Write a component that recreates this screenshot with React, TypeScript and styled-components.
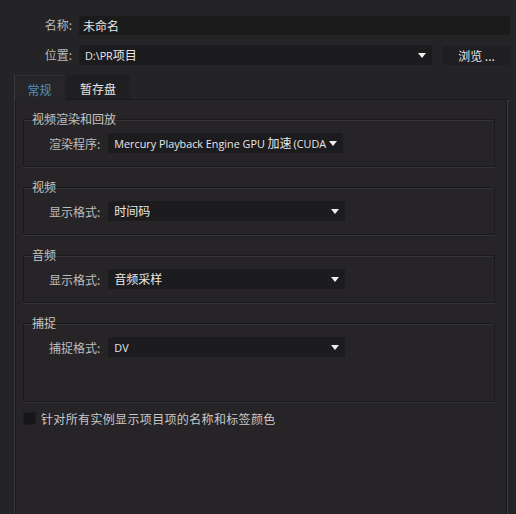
import React from "react";
import styled, { createGlobalStyle } from "styled-components";

const Global = createGlobalStyle`
  html, body { margin: 0; padding: 0; background: #242325; }
  body { font-family: "Noto Sans CJK SC", "Noto Sans", sans-serif; font-size: 12px; color: #cfcfcf; }
  * { box-sizing: border-box; }
`;

const Page = styled.div`
  width: 516px;
  height: 514px;
  overflow: hidden;
  background: #242325;
  padding: 15px 6px 0 14px;
  display: flex;
  flex-direction: column;
`;

const FieldRow = styled.div`
  display: grid;
  grid-template-columns: 58px 1fr auto;
  align-items: center;
  column-gap: 7px;
  height: 20px;
  margin-bottom: 10px;
`;

const Label = styled.span`
  text-align: right;
  color: #b9b9b9;
  font-size: 12px;
  line-height: 20px;
  white-space: nowrap;
`;

const TextInput = styled.div<{ $span?: boolean }>`
  grid-column: ${(p) => (p.$span ? "2 / 4" : "2 / 3")};
  height: 19px;
  background: #1b1b1c;
  color: #e6e6e6;
  padding-left: 4px;
  line-height: 19px;
  font-size: 12px;
`;

const Select = styled.div<{ $width?: number }>`
  position: relative;
  height: 20px;
  width: ${(p) => (p.$width ? `${p.$width}px` : "auto")};
  background: #1c1b1d;
  color: #e8e8e8;
  padding: 0 14px 0 6px;
  font-size: 12px;
  line-height: 20px;
  white-space: pre;
  overflow: hidden;
`;

const Arrow = styled.span`
  position: absolute;
  right: 6px;
  top: 8px;
  width: 0;
  height: 0;
  border-left: 4.5px solid transparent;
  border-right: 4.5px solid transparent;
  border-top: 5px solid #f0f0f0;
`;

const Button = styled.div`
  width: 67px;
  height: 19px;
  margin-left: 4px;
  background: #1f1e20;
  color: #e6e6e6;
  text-align: center;
  line-height: 19px;
  font-size: 12px;
`;

const Tabs = styled.div`
  display: flex;
  height: 25px;
`;

const Tab = styled.div<{ $active?: boolean }>`
  width: ${(p) => (p.$active ? "50px" : "64px")};
  height: 25px;
  line-height: 27px;
  text-align: center;
  font-size: 12px;
  color: ${(p) => (p.$active ? "#4f8fc0" : "#e6e6e6")};
  background: ${(p) => (p.$active ? "#262527" : "#1f1e20")};
  border-left: ${(p) => (p.$active ? "1px solid #3a393b" : "none")};
  border-top: ${(p) => (p.$active ? "1px solid #2f2e30" : "none")};
  margin-left: ${(p) => (p.$active ? "0" : "2px")};
  border-bottom: ${(p) => (p.$active ? "none" : "1px solid #19181a")};
`;

const TabFill = styled.div`
  flex: 1;
  border-bottom: 1px solid #19181a;
  box-shadow: 0 1px 0 #3a393b;
`;

const Panel = styled.div`
  flex: 1;
  background: #262427;
  border-left: 1px solid #3a393b;
  border-right: 1px solid #3a393b;
  box-shadow: inset 1px 0 0 #19181a, inset -1px 0 0 #19181a;
  margin-right: 2px;
  padding: 11px 12px 0 8px;
  display: flex;
  flex-direction: column;
  gap: 12px;
`;

const Group = styled.fieldset<{ $h: number }>`
  margin: 0;
  padding: 6px 0 0 8px;
  height: ${(p) => p.$h}px;
  flex: none;
  border: 1px solid #1a191b;
  box-shadow: 0 1px 0 #333234, inset 0 1px 0 #333234;
  min-width: 0;
`;

const Legend = styled.legend`
  padding: 0;
  color: #c4c4c4;
  font-size: 12px;
  line-height: 16px;
`;

const GroupRow = styled.div`
  display: flex;
  align-items: center;
  gap: 8px;
  padding-left: 17px;
`;

const RowLabel = styled.span`
  color: #bdbdbd;
  font-size: 12px;
  white-space: nowrap;
`;

const Latin = styled.span<{ $lead?: boolean }>`
  font-family: "Open Sans", "Noto Sans", "Noto Sans CJK SC", sans-serif;
  font-size: 10.8px;
  letter-spacing: 0;
  margin-left: ${(p) => (p.$lead ? "2px" : "0")};
`;

const CheckRow = styled.div`
  display: flex;
  align-items: center;
  gap: 5px;
  margin-top: -4px;
`;

const Box = styled.span`
  width: 13px;
  height: 13px;
  background: #161517;
  border: 1px solid #1e1d1f;
`;

const CheckText = styled.span`
  color: #c8c8c8;
  font-size: 12px;
  letter-spacing: 0.35px;
`;

export default function App() {
  return (
    <>
      <Global />
      <Page>
        <FieldRow>
          <Label>名称:</Label>
          <TextInput $span>未命名</TextInput>
        </FieldRow>
        <FieldRow>
          <Label>位置:</Label>
          <Select>
            <Latin>D:\PR</Latin>项目
            <Arrow />
          </Select>
          <Button>浏览 ...</Button>
        </FieldRow>
        <Tabs>
          <Tab $active>常规</Tab>
          <Tab>暂存盘</Tab>
          <TabFill />
        </Tabs>
        <Panel>
          <Group $h={56}>
            <Legend>视频渲染和回放</Legend>
            <GroupRow>
              <RowLabel>渲染程序:</RowLabel>
              <Select $width={235}>
                <Latin>Mercury Playback Engine GPU </Latin>加速<Latin $lead>(CUDA</Latin>
                <Arrow />
              </Select>
            </GroupRow>
          </Group>
          <Group $h={56}>
            <Legend>视频</Legend>
            <GroupRow>
              <RowLabel>显示格式:</RowLabel>
              <Select $width={237}>
                时间码
                <Arrow />
              </Select>
            </GroupRow>
          </Group>
          <Group $h={56}>
            <Legend>音频</Legend>
            <GroupRow>
              <RowLabel>显示格式:</RowLabel>
              <Select $width={237}>
                音频采样
                <Arrow />
              </Select>
            </GroupRow>
          </Group>
          <Group $h={87}>
            <Legend>捕捉</Legend>
            <GroupRow>
              <RowLabel>捕捉格式:</RowLabel>
              <Select $width={237}>
                <Latin>DV</Latin>
                <Arrow />
              </Select>
            </GroupRow>
          </Group>
          <CheckRow>
            <Box />
            <CheckText>针对所有实例显示项目项的名称和标签颜色</CheckText>
          </CheckRow>
        </Panel>
      </Page>
    </>
  );
}
